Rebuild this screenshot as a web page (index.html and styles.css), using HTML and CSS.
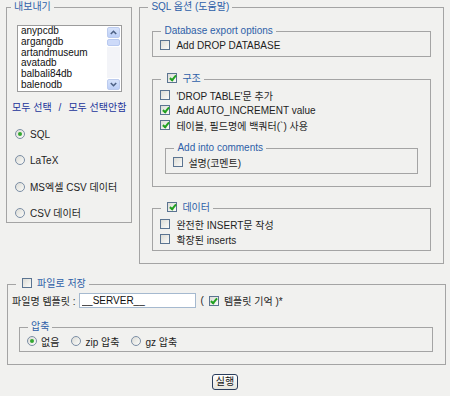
FILE: index.html
```html
<!DOCTYPE html>
<html lang="ko">

  <head>
    <meta charset="UTF-8">
    <meta name="viewport" content="width=device-width, initial-scale=1.0">
    <title>내보내기</title>
    <link rel="stylesheet" href="styles.css">
  </head>

  <body>
    <div class="page">
      <div class="top">
        <fieldset class="box export">
          <legend class="legend">내보내기</legend>
          <div class="listbox">
            <ul class="dblist">
              <li>anypcdb</li>
              <li>argangdb</li>
              <li>artandmuseum</li>
              <li>avatadb</li>
              <li>balbali84db</li>
              <li>balenodb</li>
            </ul>
            <div class="scroll">
              <div class="sbtn">
                <svg width="7" height="5" viewBox="0 0 7 5"><polyline points="0.8,4 3.5,1.3 6.2,4" fill="none" stroke="#4d6185" stroke-width="1.6"/></svg>
              </div>
              <div class="thumb"></div>
              <div class="track"></div>
              <div class="sbtn">
                <svg width="7" height="5" viewBox="0 0 7 5"><polyline points="0.8,1 3.5,3.7 6.2,1" fill="none" stroke="#4d6185" stroke-width="1.6"/></svg>
              </div>
            </div>
          </div>
          <div class="links"><a href="#">모두 선택</a><span class="slash">/</span><a href="#">모두 선택안함</a></div>
          <div class="formats">
            <label class="opt"><input type="radio" name="what" class="radio" checked>SQL</label>
            <label class="opt"><input type="radio" name="what" class="radio">LaTeX</label>
            <label class="opt"><input type="radio" name="what" class="radio">MS엑셀 CSV 데이터</label>
            <label class="opt"><input type="radio" name="what" class="radio">CSV 데이터</label>
          </div>
        </fieldset>

        <fieldset class="box sql">
          <legend class="legend">SQL 옵션 (도움말)</legend>

          <fieldset class="box inner dbopts">
            <legend class="legend">Database export options</legend>
            <label class="row"><input type="checkbox" class="chk">Add DROP DATABASE</label>
          </fieldset>

          <fieldset class="box inner struct">
            <legend class="legend"><input type="checkbox" class="chk" checked>구조</legend>
            <div class="rows">
              <label class="row"><input type="checkbox" class="chk">'DROP TABLE'문 추가</label>
              <label class="row"><input type="checkbox" class="chk" checked>Add AUTO_INCREMENT value</label>
              <label class="row"><input type="checkbox" class="chk" checked>테이블, 필드명에 백쿼터(`) 사용</label>
            </div>
            <fieldset class="box inner comments">
              <legend class="legend">Add into comments</legend>
              <label class="row"><input type="checkbox" class="chk">설명(코멘트)</label>
            </fieldset>
          </fieldset>

          <fieldset class="box inner data">
            <legend class="legend"><input type="checkbox" class="chk" checked>데이터</legend>
            <div class="rows">
              <label class="row"><input type="checkbox" class="chk">완전한 INSERT문 작성</label>
              <label class="row"><input type="checkbox" class="chk">확장된 inserts</label>
            </div>
          </fieldset>
        </fieldset>
      </div>

      <fieldset class="box save">
        <legend class="legend"><input type="checkbox" class="chk">파일로 저장</legend>
        <div class="filerow">
          <span>파일명 템플릿 :</span>
          <input type="text" class="tpl" value="__SERVER__">
          <span class="paren">(</span>
          <input type="checkbox" class="chk" checked>
          <span>템플릿 기억 )*</span>
        </div>
        <fieldset class="box inner compress">
          <legend class="legend">압축</legend>
          <div class="radios">
            <label class="opt"><input type="radio" name="comp" class="radio" checked>없음</label>
            <label class="opt"><input type="radio" name="comp" class="radio">zip 압축</label>
            <label class="opt"><input type="radio" name="comp" class="radio">gz 압축</label>
          </div>
        </fieldset>
      </fieldset>

      <div class="actions">
        <button class="go">실행</button>
      </div>
    </div>
  </body>

</html>
```

FILE: styles.css
```css
html {
  font-family: "Liberation Sans", "Noto Sans CJK KR", sans-serif;
  font-size: 10px;
  color: #1e1e1e;
}

body {
  margin: 0;
  background-color: #f1f1ef;
}

.page {
  padding: 0 6px;
}

.top {
  display: flex;
  align-items: flex-start;
  gap: 7px;
}

/* fieldsets */
.box {
  margin: 0;
  padding: 0;
  min-width: 0;
  border: 1px solid #a4a4a4;
  box-sizing: border-box;
}

.legend {
  margin-left: 8px;
  padding: 0 3px;
  line-height: 14px;
  height: 14px;
  color: #2e5fa8;
  white-space: nowrap;
}

.legend .chk {
  margin: 0 5px 0 3px;
  vertical-align: -1px;
}

label {
  display: flex;
  align-items: center;
  white-space: nowrap;
}

/* left column */
.export {
  width: 127px;
  padding-bottom: 2px;
}

.export .legend {
  margin-left: 4px;
}

.listbox {
  display: flex;
  margin: 11px 0 0 10px;
  width: 105px;
  height: 67px;
  box-sizing: border-box;
  border: 1px solid #9c9c9c;
  background: #fff;
}

.dblist {
  flex: 1;
  margin: 0;
  padding: 0 0 0 3px;
  list-style: none;
  font-size: 10px;
  line-height: 10.8px;
  color: #111;
}

.scroll {
  display: flex;
  flex-direction: column;
  width: 13px;
  padding: 1px 1px 1px 0;
  gap: 1px;
}

.sbtn {
  height: 11px;
  display: flex;
  align-items: center;
  justify-content: center;
  border: 1px solid #bccbee;
  border-radius: 2px;
  background: linear-gradient(#d7e3fb, #bccff7);
  box-sizing: border-box;
}

.thumb {
  height: 7px;
  border: 1px solid #b8c9f0;
  border-radius: 2px;
  background: #cddaf9;
  box-sizing: border-box;
}

.track {
  flex: 1;
  background: #f3f4f8;
}

.links {
  margin-top: 9px;
  padding-left: 5px;
  line-height: 14px;
  color: #22349a;
  white-space: nowrap;
}

.links a {
  color: #22349a;
  text-decoration: none;
}

.slash {
  margin: 0 7px;
}

.formats {
  display: flex;
  flex-direction: column;
  gap: 12.3px;
  margin-top: 12px;
  padding-left: 8px;
}

.opt {
  height: 14px;
}

.opt .radio {
  margin-right: 5px;
}

/* right column */
.sql {
  width: 306px;
  padding-bottom: 12px;
}

.inner {
  margin: 0 12px;
}

.row {
  height: 15px;
  padding-left: 7px;
}

.row .chk {
  margin-right: 6px;
}

.dbopts {
  margin-top: 10px;
  padding-bottom: 4px;
}

.dbopts .row {
  height: 14px;
}

.struct {
  margin-top: 15px;
  padding-bottom: 12px;
}

.rows {
  padding-top: 1.5px;
}

.comments {
  margin-top: 8.5px;
  padding-bottom: 4px;
}

.comments .row {
  height: 14px;
}

.comments .row .chk {
  margin-right: 5px;
}

.data {
  margin-top: 14px;
  padding-bottom: 3px;
}

/* file save */
.save {
  margin: 13.5px 0 0 1px;
  width: 439px;
  padding-bottom: 12px;
}

.filerow {
  display: flex;
  align-items: center;
  height: 15px;
  margin-top: 2px;
  padding-left: 4px;
  white-space: nowrap;
}

.tpl {
  width: 117px;
  height: 15px;
  margin: 0 0 0 3px;
  padding: 0 2px;
  box-sizing: border-box;
  border: 1px solid #a5b9cf;
  background: #fff;
  font: inherit;
  color: #111;
}

.paren {
  margin-left: 5px;
}

.filerow .chk {
  margin: 0 5px;
}

.compress {
  margin: 12px 12px 0 11px;
  padding-bottom: 3px;
}

.radios {
  display: flex;
  align-items: center;
  gap: 12px;
  padding-left: 7px;
}

.radios .opt .radio {
  margin-right: 4px;
}

.actions {
  margin-top: 9px;
  text-align: center;
}

.go {
  height: 16px;
  padding: 0 3px;
  border: 1px solid #2a3d5c;
  border-radius: 3px;
  background: linear-gradient(#ffffff, #e6e5de);
  font: inherit;
  line-height: 14px;
  color: #111;
}

/* controls */
.chk,
.radio {
  appearance: none;
  -webkit-appearance: none;
  position: relative;
  flex: none;
  width: 10px;
  height: 10px;
  margin: 0;
  box-sizing: border-box;
  border: 1px solid #5b7491;
  background: linear-gradient(135deg, #dcdcd6, #fbfbf9);
}

.chk:checked::after {
  content: "";
  position: absolute;
  left: 2.5px;
  top: 0;
  width: 2px;
  height: 5px;
  border: solid #21a121;
  border-width: 0 2px 2px 0;
  transform: rotate(40deg);
}

.radio {
  border-color: #7b8ea5;
  border-radius: 50%;
}

.radio:checked::after {
  content: "";
  position: absolute;
  left: 2px;
  top: 2px;
  width: 4px;
  height: 4px;
  border-radius: 50%;
  background: #34a832;
}
```
